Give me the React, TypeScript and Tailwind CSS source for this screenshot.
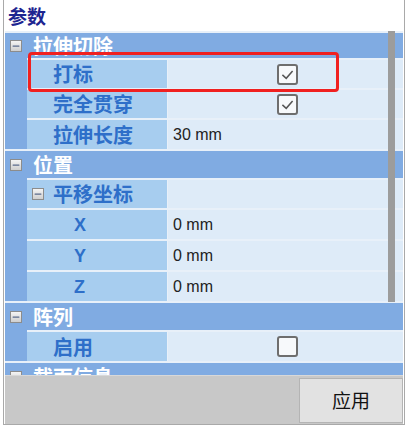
import { Minus } from 'lucide-react';

type Row =
  | { kind: 'header'; title: string; h: string }
  | { kind: 'group'; label: string; h: string }
  | { kind: 'prop'; label: string; h: string; value?: string; check?: boolean; sub?: boolean };

const ROWS: Row[] = [
  { kind: 'header', title: '拉伸切除', h: 'h-[27px]' },
  { kind: 'prop', label: '打标', h: 'h-[30px]', check: true },
  { kind: 'prop', label: '完全贯穿', h: 'h-[30px]', check: true },
  { kind: 'prop', label: '拉伸长度', h: 'h-[31px]', value: '30 mm' },
  { kind: 'header', title: '位置', h: 'h-[29px]' },
  { kind: 'group', label: '平移坐标', h: 'h-[30px]' },
  { kind: 'prop', label: 'X', h: 'h-[31px]', value: '0 mm', sub: true },
  { kind: 'prop', label: 'Y', h: 'h-[31px]', value: '0 mm', sub: true },
  { kind: 'prop', label: 'Z', h: 'h-[31px]', value: '0 mm', sub: true },
  { kind: 'header', title: '阵列', h: 'h-[29px]' },
  { kind: 'prop', label: '启用', h: 'h-[31px]', check: false },
  { kind: 'header', title: '截面信息', h: 'h-[29px]' },
];

const cjk = "font-['Noto_Sans_CJK_SC','Noto_Sans',sans-serif]";

const Toggle = () => (
  <span className="flex h-[12px] w-[12px] shrink-0 items-center justify-center border border-[#8c8c8c] bg-gradient-to-b from-[#f4f4f4] to-[#cfcfcf]">
    <Minus className="h-[10px] w-[10px] text-[#5b6b8c]" strokeWidth={3} />
  </span>
);

const CheckBox = ({ checked }: { checked: boolean }) => (
  <span className="flex h-[21px] w-[21px] items-center justify-center rounded-[3px] border-2 border-[#6e6e6e] bg-[#f7f9fb]">
    {checked && (
      <svg viewBox="0 0 20 20" className="h-[17px] w-[17px]">
        <path d="M4 10.5 L8.5 14.5 L16 6" fill="none" stroke="#555" strokeWidth="1.8" />
      </svg>
    )}
  </span>
);

const GridRow = ({ row }: { row: Row }) => {
  if (row.kind === 'header') {
    return (
      <div className={`flex ${row.h} shrink-0 items-center gap-[11px] border-t-2 border-[#e8f0f9] bg-[#80abe2] pl-[5px]`}>
        <Toggle />
        <span className={`${cjk} text-[20px] leading-none font-bold text-white`}>{row.title}</span>
      </div>
    );
  }
  return (
    <div className={`flex ${row.h} shrink-0`}>
      <div className="w-[22px] shrink-0 bg-[#80abe2]" />
      <div className="flex w-[141px] shrink-0 items-center border-t-2 border-r border-[#e8f0f9] bg-[#a7cdef] pl-[5px]">
        {row.kind === 'group' ? (
          <>
            <Toggle />
            <span className={`${cjk} ml-[9px] text-[20px] leading-none font-bold text-[#2e6fc9]`}>{row.label}</span>
          </>
        ) : (
          <span
            className={`${row.sub ? 'ml-[42px] font-[Liberation_Sans,Arial,sans-serif] text-[18px]' : `ml-[21px] ${cjk} text-[20px]`} leading-none font-bold text-[#2e6fc9]`}
          >
            {row.label}
          </span>
        )}
      </div>
      <div className="flex flex-1 items-center border-t-2 border-[#e8f0f9] bg-[#deebf8]">
        {row.kind === 'prop' && row.check !== undefined ? (
          <div className="flex flex-1 justify-center pl-[3px]">
            <CheckBox checked={row.check} />
          </div>
        ) : row.kind === 'prop' && row.value ? (
          <span className="pl-[5px] font-[Liberation_Sans,Arial,sans-serif] text-[16px] text-[#222]">{row.value}</span>
        ) : null}
      </div>
    </div>
  );
};

export default function App() {
  return (
    <div className="relative h-[428px] w-[409px] overflow-hidden bg-white">
      <div className="ml-[3px] flex h-[425px] w-[402px] flex-col border-x border-b border-[#a9a9a9] px-px">
        <div className="flex h-[31px] shrink-0 items-center pl-[3px]">
          <span className={`${cjk} text-[19px] leading-none font-bold text-[#1d2590]`}>参数</span>
        </div>

        <div className="relative flex h-[344px] shrink-0 flex-col overflow-hidden">
          {ROWS.map((row, i) => (
            <GridRow key={i} row={row} />
          ))}
          <div className="absolute top-0 right-[8px] h-[271px] w-[7px] bg-[#9c9c9c]" />
        </div>

        <div className="flex flex-1 justify-end border-t border-[#d8d8d8] bg-[#c8c8c8] pt-[2px]">
          <button className={`h-[45px] w-[104px] border border-[#b4b4b4] bg-[#e2e2e2] ${cjk} text-[19px] text-[#111]`}>
            应用
          </button>
        </div>
      </div>

      <div className="absolute top-[52px] left-[28px] h-[40px] w-[311px] rounded-[4px] border-[3px] border-[#f02020]" />
    </div>
  );
}
